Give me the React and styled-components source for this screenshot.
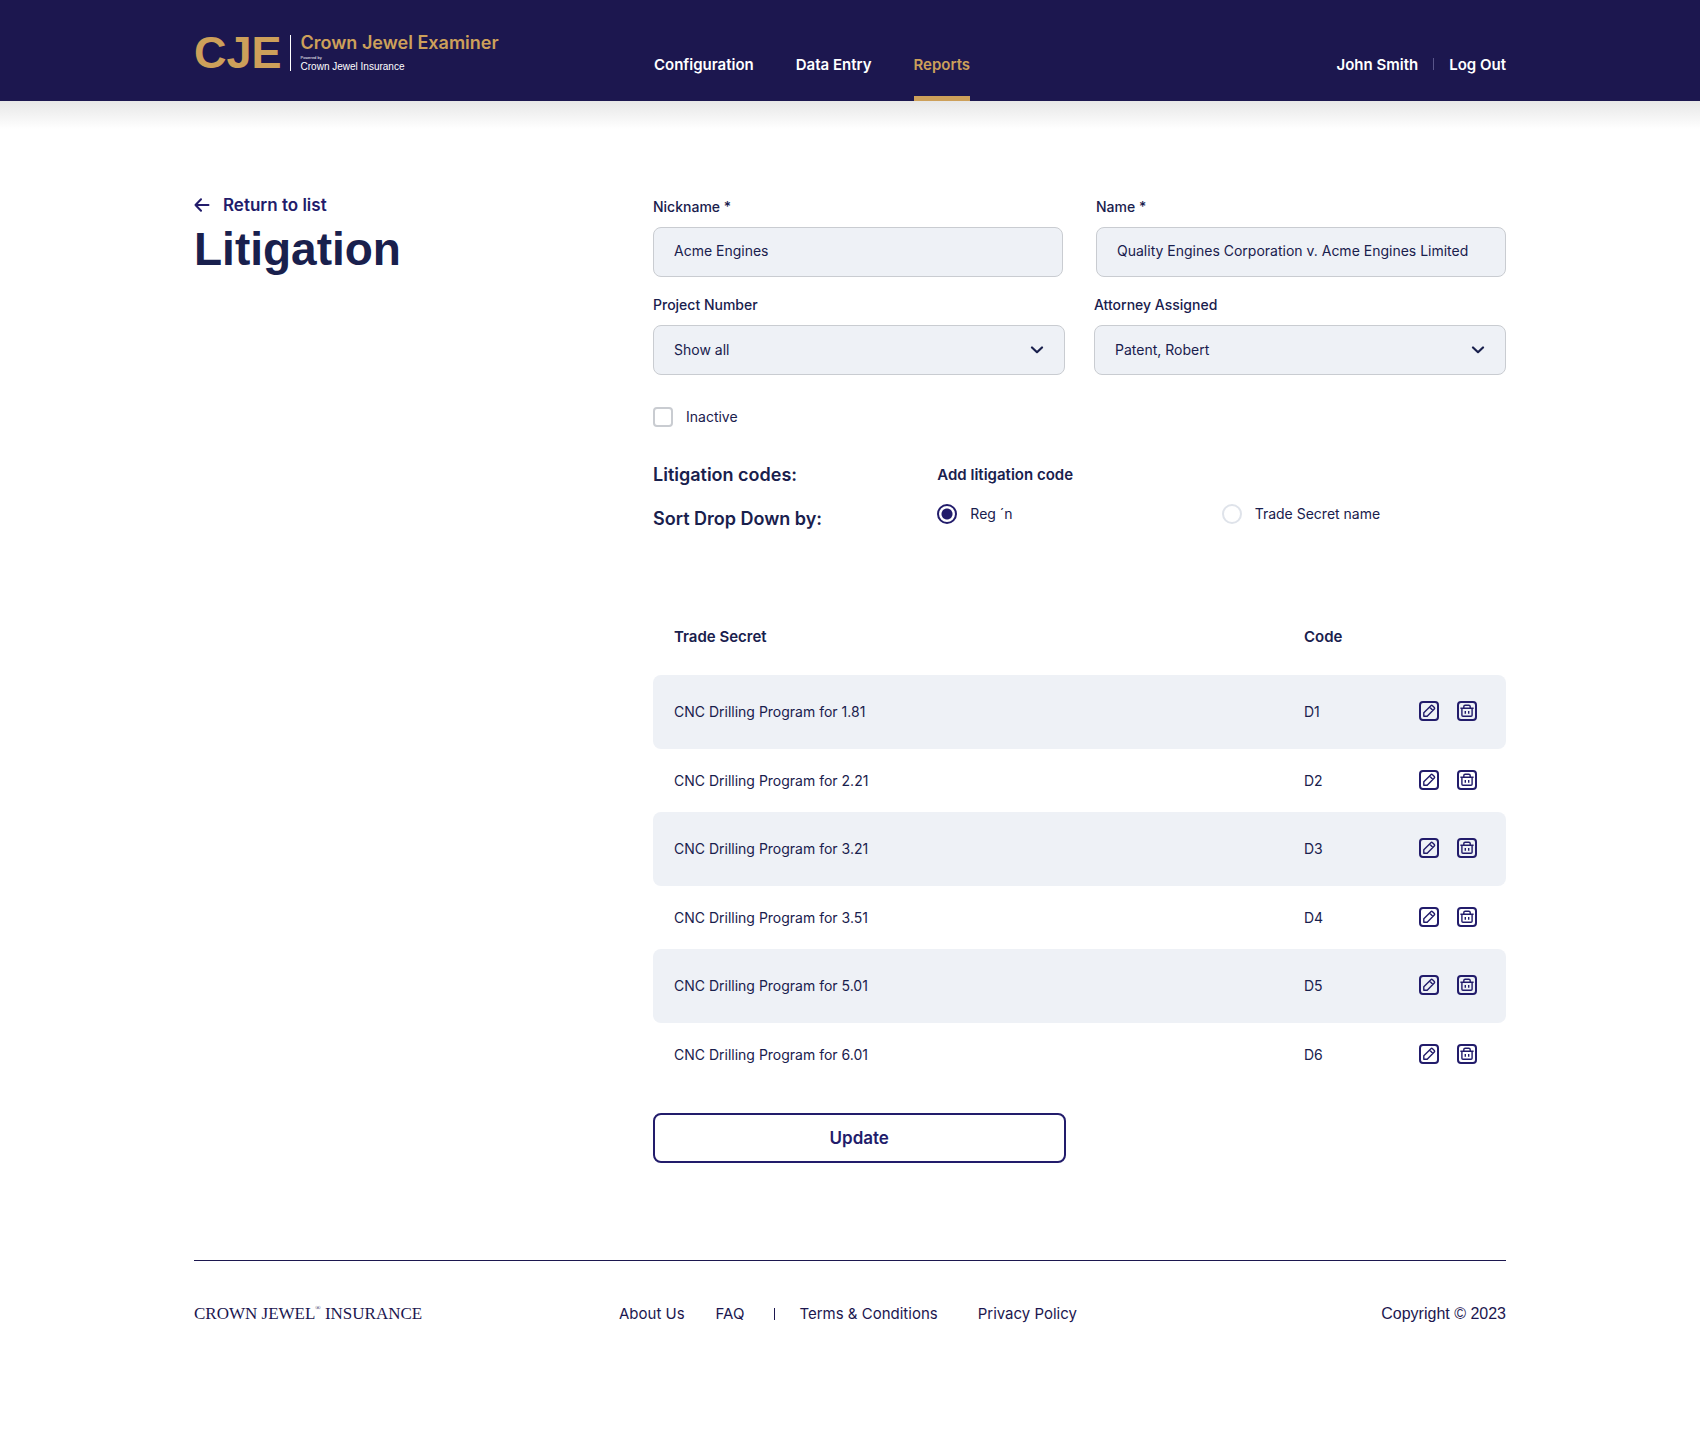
import React from 'react';
import styled, { createGlobalStyle, css } from 'styled-components';

const color = {
  navy: '#1c174f',
  indigo: '#221c6b',
  ink: '#19204d',
  gold: '#cda05a',
  field: '#eef1f6',
  line: '#c9ccd1',
  pale: '#dfe3ea',
};

const sans = '"Liberation Sans", Arial, sans-serif';
const inter = 'Inter, "Liberation Sans", sans-serif';
const serif = '"Liberation Serif", "Times New Roman", serif';

const GlobalStyle = createGlobalStyle`
  *, *::before, *::after { box-sizing: border-box; }
  body {
    margin: 0;
    background: #fff;
    color: ${color.ink};
    font-family: ${inter};
    font-size: 14px;
    line-height: 20px;
  }
  a { color: inherit; text-decoration: none; }
  button, input, select { font: inherit; color: inherit; }
`;

const Container = styled.div`
  max-width: 1360px;
  margin: 0 auto;
  padding: 0 24px;
`;

const Header = styled.header`
  background: ${color.navy};
  color: #fff;
`;

const HeaderShade = styled.div`
  height: 28px;
  background: linear-gradient(#e7e7e7, #fff);
`;

const HeaderRow = styled(Container)`
  display: grid;
  grid-template-columns: 460px 1fr auto;
  height: 101px;
`;

const Brand = styled.a`
  display: flex;
  align-items: flex-start;
  padding-top: 35px;
`;

const BrandMark = styled.span`
  color: ${color.gold};
  font-family: ${sans};
  font-size: 45px;
  font-weight: 700;
  line-height: 36px;
`;

const BrandText = styled.span`
  display: flex;
  flex-direction: column;
  height: 36px;
  margin-left: 8px;
  padding-left: 10px;
  border-left: 1px solid #fff;
`;

const BrandName = styled.span`
  color: ${color.gold};
  font-size: 18px;
  font-weight: 600;
  line-height: 16px;
`;

const BrandNote = styled.span`
  margin-top: 4px;
  font-family: ${sans};
  font-size: 4px;
  line-height: 6px;
`;

const BrandOwner = styled.span`
  font-family: ${sans};
  font-size: 10px;
  line-height: 12px;
`;

const Nav = styled.nav`
  display: flex;
  gap: 42px;
`;

const NavLink = styled.a`
  padding-top: 55px;
  font-size: 15px;
  font-weight: 600;
  ${({ $active }) =>
    $active &&
    css`
      color: ${color.gold};
      border-bottom: 5px solid ${color.gold};
    `}
`;

const Account = styled.div`
  display: flex;
`;

const AccountDivider = styled.span`
  width: 1px;
  height: 12px;
  margin: 58px 15px 0;
  background: #59558a;
`;

const Main = styled(Container).attrs({ as: 'main' })`
  display: grid;
  grid-template-columns: 459px minmax(0, 1fr);
  padding-top: 64px;
`;

const BackLink = styled.a`
  display: flex;
  align-items: center;
  gap: 13px;
  color: ${color.indigo};
  font-size: 17px;
  font-weight: 600;
  line-height: 24px;
`;

const Title = styled.h1`
  margin: 2px 0 0;
  font-family: ${sans};
  font-size: 46px;
  font-weight: 700;
  line-height: 60px;
`;

const Form = styled.form`
  padding-top: 4px;
`;

const FieldRow = styled.div`
  display: grid;
  grid-template-columns: 1fr 1fr;
  column-gap: ${({ $gap }) => $gap}px;
  margin-bottom: 18px;
`;

const Field = styled.div`
  display: flex;
  flex-direction: column;
  gap: 10px;
  min-width: 0;
`;

const Label = styled.label`
  font-weight: 500;
`;

const boxed = css`
  width: 100%;
  height: 50px;
  padding: 0 20px;
  background: ${color.field};
  border: 1px solid ${color.line};
  border-radius: 8px;
`;

const TextInput = styled.input`
  ${boxed}
  padding-bottom: 3px;
`;

const SelectWrap = styled.div`
  display: grid;
  align-items: center;
  > * { grid-area: 1 / 1; }
  svg { justify-self: end; margin-right: 21px; pointer-events: none; }
`;

const Select = styled.select`
  ${boxed}
  appearance: none;
`;

const Choice = styled.label`
  display: flex;
  align-items: center;
  gap: 13px;
  line-height: ${({ $tall }) => ($tall ? 22 : 20)}px;
`;

const Checkbox = styled.input`
  appearance: none;
  width: 20px;
  height: 20px;
  margin: 0;
  background: #fff;
  border: 2px solid ${color.line};
  border-radius: 4px;
  &:checked { background: ${color.indigo}; }
`;

const Radio = styled.input`
  appearance: none;
  width: 20px;
  height: 20px;
  margin: 0;
  border: 2px solid ${color.pale};
  border-radius: 50%;
  &:checked {
    border-color: ${color.indigo};
    background: radial-gradient(circle, ${color.indigo} 5px, #fff 6px);
  }
`;

const InactiveRow = styled.div`
  display: flex;
  margin-top: 32px;
`;

const Codes = styled.div`
  display: grid;
  grid-template-columns: 1fr 2fr;
  row-gap: 12px;
  align-items: start;
  margin-top: 32px;
`;

const GroupLabel = styled.h2`
  margin: 0;
  font-size: 18px;
  font-weight: 600;
  line-height: 32px;
`;

const TextButton = styled.button`
  justify-self: start;
  padding: 0;
  border: 0;
  background: none;
  font-size: 15px;
  font-weight: 600;
  line-height: 32px;
`;

const RadioGroup = styled.div`
  display: grid;
  grid-template-columns: 1fr 1fr;
`;

const Table = styled.table`
  width: 100%;
  margin-top: 62px;
  border-spacing: 0;
  table-layout: fixed;
`;

const HeadCell = styled.th`
  width: ${({ $width }) => $width};
  height: 78px;
  padding: 2px 0 0 ${({ $inset }) => ($inset ? 21 : 0)}px;
  font-size: 15px;
  font-weight: 600;
  text-align: left;
`;

const Row = styled.tr`
  height: 63px;
  &:nth-child(odd) { height: 74px; }
  &:nth-child(odd) td { background: ${color.field}; }
  td:first-child { border-radius: 8px 0 0 8px; }
  td:last-child { border-radius: 0 8px 8px 0; }
`;

const Cell = styled.td`
  padding: 0 0 ${({ $lift }) => ($lift ? 2 : 0)}px ${({ $inset }) => ($inset ? 21 : 0)}px;
`;

const Actions = styled.div`
  display: flex;
  gap: 18px;
`;

const IconButton = styled.button`
  display: flex;
  padding: 0;
  border: 0;
  background: none;
  color: ${color.indigo};
`;

const SubmitButton = styled.button`
  width: calc(50% - 14px);
  height: 50px;
  margin-top: 27px;
  border: 2px solid ${color.indigo};
  border-radius: 8px;
  background: #fff;
  color: ${color.indigo};
  font-size: 17px;
  font-weight: 600;
`;

const Footer = styled(Container).attrs({ as: 'footer' })`
  margin-top: 97px;
  padding-bottom: 96px;
`;

const FooterRow = styled.div`
  display: grid;
  grid-template-columns: 425px 1fr auto;
  align-items: center;
  padding-top: 43px;
  border-top: 1px solid ${color.navy};
  color: ${color.navy};
  font-size: 15px;
`;

const FooterBrand = styled.span`
  font-family: ${serif};
  font-size: 17px;
  white-space: nowrap;
  sup { font-size: 7px; line-height: 6px; vertical-align: 9px; }
`;

const FooterNav = styled.nav`
  display: flex;
  align-items: center;
`;

const FooterGroup = styled.div`
  display: flex;
  gap: ${({ $gap }) => $gap}px;
`;

const FooterDivider = styled.span`
  width: 1px;
  height: 12px;
  margin: 0 24px 0 30px;
  background: ${color.navy};
`;

const Copyright = styled.span`
  font-family: ${sans};
  font-size: 16px;
`;

const ArrowLeft = () => (
  <svg width="16" height="14" viewBox="0 0 16 14" fill="none" stroke="currentColor" strokeWidth="2" strokeLinecap="round" strokeLinejoin="round" aria-hidden="true">
    <path d="M14.5 7H1.5M7 1.2 1.5 7 7 12.8" />
  </svg>
);

const Chevron = () => (
  <svg width="14" height="8" viewBox="0 0 14 8" fill="none" stroke={color.ink} strokeWidth="2.2" strokeLinecap="round" strokeLinejoin="round" aria-hidden="true">
    <path d="M2 1.5 7 6.2 12 1.5" />
  </svg>
);

const EditIcon = () => (
  <svg width="20" height="20" viewBox="0 0 20 20" fill="none" stroke="currentColor" strokeLinejoin="round" aria-hidden="true">
    <rect x="1" y="1" width="18" height="18" rx="3" strokeWidth="2" />
    <path d="M4.8 15.2v-3.4l7.1-7.1q.8-.7 1.6 0l1.8 1.8q.7.8 0 1.6l-7.1 7.1zM10.6 6.1l3.3 3.3" strokeWidth="1.4" />
  </svg>
);

const TrashIcon = () => (
  <svg width="20" height="20" viewBox="0 0 20 20" fill="none" stroke="currentColor" strokeLinejoin="round" aria-hidden="true">
    <rect x="1" y="1" width="18" height="18" rx="3" strokeWidth="2" />
    <path d="M3.4 7.2h13.2M6.8 7V5.6q0-1.4 1.4-1.4h3.6q1.4 0 1.4 1.4V7M4.9 7.4v6.8q0 1.1 1.1 1.1h8q1.1 0 1.1-1.1V7.4M8.3 10v2.8M11.7 10v2.8" strokeWidth="1.4" />
  </svg>
);

const secrets = [
  ['CNC Drilling Program for 1.81', 'D1'],
  ['CNC Drilling Program for 2.21', 'D2'],
  ['CNC Drilling Program for 3.21', 'D3'],
  ['CNC Drilling Program for 3.51', 'D4'],
  ['CNC Drilling Program for 5.01', 'D5'],
  ['CNC Drilling Program for 6.01', 'D6'],
];

const SelectField = ({ id, label, value }) => (
  <Field>
    <Label htmlFor={id}>{label}</Label>
    <SelectWrap>
      <Select id={id} defaultValue={value}>
        <option>{value}</option>
      </Select>
      <Chevron />
    </SelectWrap>
  </Field>
);

const TextField = ({ id, label, value }) => (
  <Field>
    <Label htmlFor={id}>{label}</Label>
    <TextInput id={id} type="text" defaultValue={value} />
  </Field>
);

export default function App() {
  return (
    <>
      <GlobalStyle />
      <Header>
        <HeaderRow>
          <Brand href="#">
            <BrandMark>CJE</BrandMark>
            <BrandText>
              <BrandName>Crown Jewel Examiner</BrandName>
              <BrandNote>Powered by</BrandNote>
              <BrandOwner>Crown Jewel Insurance</BrandOwner>
            </BrandText>
          </Brand>
          <Nav>
            <NavLink href="#">Configuration</NavLink>
            <NavLink href="#">Data Entry</NavLink>
            <NavLink href="#" $active aria-current="page">Reports</NavLink>
          </Nav>
          <Account>
            <NavLink href="#">John Smith</NavLink>
            <AccountDivider />
            <NavLink href="#">Log Out</NavLink>
          </Account>
        </HeaderRow>
      </Header>
      <HeaderShade />

      <Main>
        <div>
          <BackLink href="#">
            <ArrowLeft />
            Return to list
          </BackLink>
          <Title>Litigation</Title>
        </div>

        <Form onSubmit={(e) => e.preventDefault()}>
          <FieldRow $gap={33}>
            <TextField id="nickname" label="Nickname *" value="Acme Engines" />
            <TextField id="name" label="Name *" value="Quality Engines Corporation v. Acme Engines Limited" />
          </FieldRow>
          <FieldRow $gap={29}>
            <SelectField id="project" label="Project Number" value="Show all" />
            <SelectField id="attorney" label="Attorney Assigned" value="Patent, Robert" />
          </FieldRow>

          <InactiveRow>
            <Choice>
              <Checkbox type="checkbox" />
              Inactive
            </Choice>
          </InactiveRow>

          <Codes>
            <GroupLabel>Litigation codes:</GroupLabel>
            <TextButton type="button">Add litigation code</TextButton>
            <GroupLabel id="sort-label">Sort Drop Down by:</GroupLabel>
            <RadioGroup role="radiogroup" aria-labelledby="sort-label">
              <Choice $tall>
                <Radio type="radio" name="sort" defaultChecked />
                Reg ´n
              </Choice>
              <Choice $tall>
                <Radio type="radio" name="sort" />
                Trade Secret name
              </Choice>
            </RadioGroup>
          </Codes>

          <Table>
            <thead>
              <tr>
                <HeadCell $inset scope="col">Trade Secret</HeadCell>
                <HeadCell $width="115px" scope="col">Code</HeadCell>
                <HeadCell $width="87px" aria-label="Actions" />
              </tr>
            </thead>
            <tbody>
              {secrets.map(([name, code]) => (
                <Row key={code}>
                  <Cell $inset>{name}</Cell>
                  <Cell>{code}</Cell>
                  <Cell $lift>
                    <Actions>
                      <IconButton type="button" aria-label={`Edit ${code}`}><EditIcon /></IconButton>
                      <IconButton type="button" aria-label={`Delete ${code}`}><TrashIcon /></IconButton>
                    </Actions>
                  </Cell>
                </Row>
              ))}
            </tbody>
          </Table>

          <SubmitButton type="submit">Update</SubmitButton>
        </Form>
      </Main>

      <Footer>
        <FooterRow>
          <FooterBrand>CROWN JEWEL<sup>®</sup> INSURANCE</FooterBrand>
          <FooterNav>
            <FooterGroup $gap={31}>
              <a href="#">About Us</a>
              <a href="#">FAQ</a>
            </FooterGroup>
            <FooterDivider />
            <FooterGroup $gap={40}>
              <a href="#">Terms &amp; Conditions</a>
              <a href="#">Privacy Policy</a>
            </FooterGroup>
          </FooterNav>
          <Copyright>Copyright © 2023</Copyright>
        </FooterRow>
      </Footer>
    </>
  );
}
